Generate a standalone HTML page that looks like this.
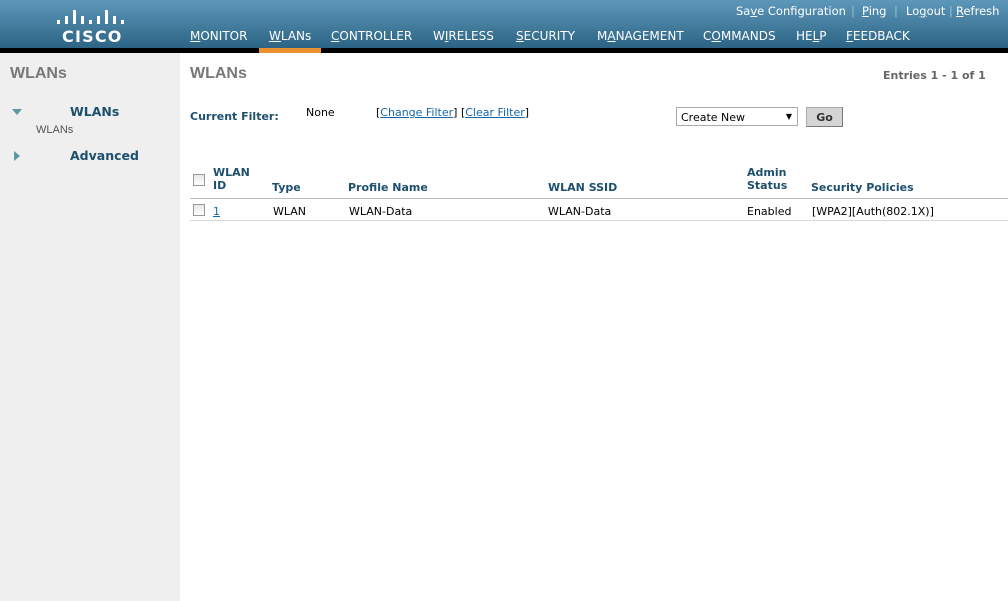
<!DOCTYPE html>
<html><head><meta charset="utf-8"><style>
*{margin:0;padding:0;box-sizing:border-box}
body{width:1008px;height:601px;overflow:hidden;font-family:"DejaVu Sans",Verdana,sans-serif;font-size:11px;background:#fff;position:relative;color:#000}
.a{position:absolute;white-space:nowrap}
#hdr{position:absolute;left:0;top:0;width:1008px;height:48px;background:linear-gradient(#5d97b9,#2d6485)}
#blk{position:absolute;left:0;top:48px;width:1008px;height:5px;background:#000}
#org{position:absolute;left:259px;top:48px;width:62px;height:5px;background:#e8912e}
.nav{color:#fff;font-size:12px;top:29px}
.tl{color:#fff;font-size:11.5px;top:4px}
.sep{color:#9fc0d4}
#side{position:absolute;left:0;top:53px;width:180px;height:548px;background:#efefef}
.h{color:#1d4f6e;font-weight:bold;font-size:11px}
.lk{color:#1566a8;text-decoration:underline}
.line{position:absolute;left:190px;width:818px;height:1px;background:#d8d8d8}
.cb{position:absolute;width:12px;height:12px;border:1px solid #999;background:linear-gradient(#e8e8e8,#fff)}
</style></head><body>
<div id="hdr"></div><div id="blk"></div><div id="org"></div>
<svg class="a" style="left:56px;top:7px" width="70" height="20">
<g fill="#fff">
<rect x="1" y="13" width="3" height="4"/><rect x="9" y="9" width="3" height="8"/><rect x="17" y="3" width="3" height="14"/><rect x="25" y="9" width="3" height="8"/><rect x="33" y="13" width="3" height="4"/><rect x="41" y="9" width="3" height="8"/><rect x="49" y="3" width="3" height="14"/><rect x="57" y="9" width="3" height="8"/><rect x="65" y="13" width="3" height="4"/>
</g></svg>
<div class="a" style="left:62px;top:27px;color:#fff;font-weight:bold;font-size:16px;letter-spacing:1.2px">CISCO</div>
<div class="a nav" style="left:190px"><u>M</u>ONITOR</div>
<div class="a nav" style="left:269px"><u>W</u>LANs</div>
<div class="a nav" style="left:331px"><u>C</u>ONTROLLER</div>
<div class="a nav" style="left:433px">W<u>I</u>RELESS</div>
<div class="a nav" style="left:516px"><u>S</u>ECURITY</div>
<div class="a nav" style="left:597px">M<u>A</u>NAGEMENT</div>
<div class="a nav" style="left:703px">C<u>O</u>MMANDS</div>
<div class="a nav" style="left:796px">HE<u>L</u>P</div>
<div class="a nav" style="left:846px"><u>F</u>EEDBACK</div>
<div class="a tl" style="left:736px">Sa<u>v</u>e Configuration</div>
<div class="a tl sep" style="left:851px">|</div>
<div class="a tl" style="left:862px"><u>P</u>ing</div>
<div class="a tl sep" style="left:894px">|</div>
<div class="a tl" style="left:906px">Lo<u>g</u>out</div>
<div class="a tl sep" style="left:949px">|</div>
<div class="a tl" style="left:956px"><u>R</u>efresh</div>
<div id="side"></div>
<div class="a" style="left:10px;top:65px;color:#777;font-weight:bold;font-size:16px;font-family:'Liberation Sans',Arial,sans-serif">WLANs</div>
<svg class="a" style="left:12px;top:109px" width="10" height="8"><path d="M0 0H10L5 6Z" fill="#5b9a9f"/></svg>
<div class="a h" style="left:70px;top:104px;font-size:12.5px">WLANs</div>
<div class="a" style="left:36px;top:124px;color:#555;font-size:11px;font-family:'Liberation Sans',Arial,sans-serif">WLANs</div>
<svg class="a" style="left:14px;top:151px" width="8" height="11"><path d="M0 0V10L6 5Z" fill="#5b9a9f"/></svg>
<div class="a h" style="left:70px;top:148px;font-size:12.5px">Advanced</div>
<div class="a" style="left:190px;top:65px;color:#777;font-weight:bold;font-size:16px;font-family:'Liberation Sans',Arial,sans-serif">WLANs</div>
<div class="a" style="left:883px;top:69px;color:#666;font-weight:bold;font-size:11px">Entries 1 - 1 of 1</div>
<div class="a h" style="left:190px;top:110px">Current Filter:</div>
<div class="a" style="left:306px;top:106px">None</div>
<div class="a" style="left:376px;top:106px">[<span class="lk">Change Filter</span>] [<span class="lk">Clear Filter</span>]</div>
<div class="a" style="left:676px;top:107px;width:122px;height:19px;border:1px solid #aaa;background:#fff;padding:3px 4px">Create New<span style="position:absolute;right:5px;top:4px;font-size:8px">▼</span></div>
<div class="a" style="left:806px;top:107px;width:37px;height:20px;background:#d4d4d4;border:1px solid #aaa;border-right-color:#777;border-bottom-color:#777;text-align:center;font-weight:bold;padding-top:3px;color:#333">Go</div>
<div class="cb" style="left:193px;top:174px"></div>
<div class="a h" style="left:213px;top:166px">WLAN<br>ID</div>
<div class="a h" style="left:272px;top:181px">Type</div>
<div class="a h" style="left:348px;top:181px">Profile Name</div>
<div class="a h" style="left:548px;top:181px">WLAN SSID</div>
<div class="a h" style="left:747px;top:166px">Admin<br>Status</div>
<div class="a h" style="left:811px;top:181px">Security Policies</div>
<div class="line" style="top:198px;background:#bbb"></div>
<div class="cb" style="left:193px;top:204px"></div>
<div class="a lk" style="left:213px;top:205px">1</div>
<div class="a" style="left:273px;top:205px">WLAN</div>
<div class="a" style="left:349px;top:205px">WLAN-Data</div>
<div class="a" style="left:548px;top:205px">WLAN-Data</div>
<div class="a" style="left:747px;top:205px">Enabled</div>
<div class="a" style="left:812px;top:205px">[WPA2][Auth(802.1X)]</div>
<div class="line" style="top:220px"></div>
</body></html>
